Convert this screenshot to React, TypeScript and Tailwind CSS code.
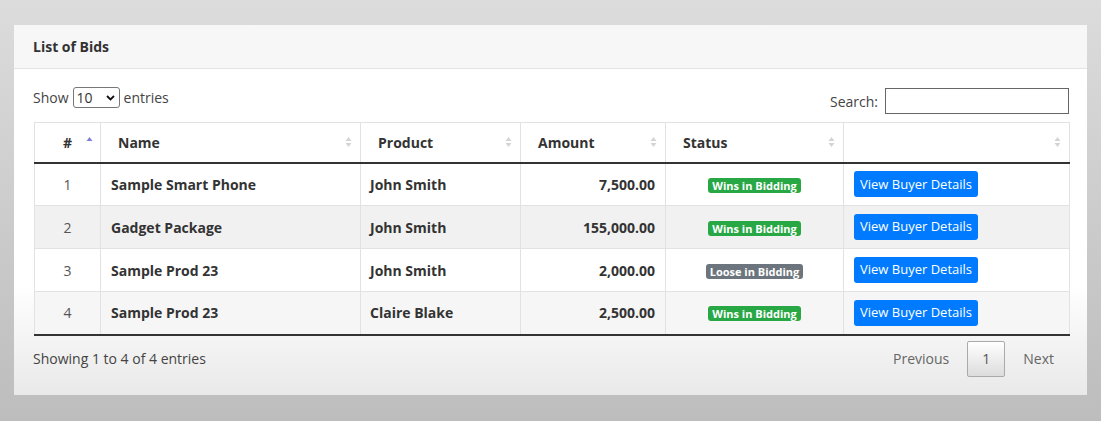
import React from 'react';

type Bid = {
  id: number;
  name: string;
  buyer: string;
  amount: string;
  won: boolean;
};

const bids: Bid[] = [
  { id: 1, name: 'Sample Smart Phone', buyer: 'John Smith', amount: '7,500.00', won: true },
  { id: 2, name: 'Gadget Package', buyer: 'John Smith', amount: '155,000.00', won: true },
  { id: 3, name: 'Sample Prod 23', buyer: 'John Smith', amount: '2,000.00', won: false },
  { id: 4, name: 'Sample Prod 23', buyer: 'Claire Blake', amount: '2,500.00', won: true },
];

const SortIcon = ({ active = false }: { active?: boolean }) => (
  <svg
    width="7"
    height="11"
    viewBox="0 0 7 11"
    className={`absolute top-1/2 -translate-y-1/2 ${active ? 'right-[7px]' : 'right-[8px]'}`}
  >
    {active ? (
      <path d="M3.5 0.5 L6.5 4.5 L0.5 4.5 Z" fill="#8080d8" />
    ) : (
      <>
        <path d="M3.5 0.5 L6.5 4.5 L0.5 4.5 Z" fill="#d4d4d4" />
        <path d="M3.5 10.5 L6.5 6.5 L0.5 6.5 Z" fill="#d4d4d4" />
      </>
    )}
  </svg>
);

const Th = ({ children, className = '', active = false }: { children?: React.ReactNode; className?: string; active?: boolean }) => (
  <th className={`relative h-[40px] border-x border-[#e2e2e2] py-0 pl-[17px] pr-[30px] text-[14px] font-bold text-[#333] ${className}`}>
    {children}
    <SortIcon active={active} />
  </th>
);

const App = () => {
  return (
    <div
      className="h-[421px] w-[1101px] overflow-hidden bg-gradient-to-b from-[#dcdcdc] to-[#bdbdbd] pt-[25px]"
      style={{ fontFamily: '"Open Sans", "Noto Sans", sans-serif' }}
    >
      <div className="ml-[14px] w-[1073px] bg-gradient-to-b from-white from-[70%] to-[#e9e9e9]">
        <div className="flex h-[44px] items-center border-b border-[#e4e4e4] bg-[#f7f7f7] pl-[19px] text-[14px] font-bold text-[#333]">
          List of Bids
        </div>

        <div className="pl-[19px] pr-[18px] pt-[18px] pb-[18px]">
          <div className="flex items-start justify-between">
            <div className="flex items-center gap-[4px] text-[14px] text-[#444]">
              <span>Show</span>
              <div className="flex h-[21px] w-[47px] items-center justify-between rounded-[3px] border border-[#777] bg-white pl-[3px] pr-[4px] text-[14px] text-[#333]">
                <span>10</span>
                <svg width="9" height="6" viewBox="0 0 9 6">
                  <path d="M1 1 L4.5 4.5 L8 1" fill="none" stroke="#111" strokeWidth="1.8" />
                </svg>
              </div>
              <span>entries</span>
            </div>
            <div className="flex items-center gap-[7px] pt-[1px] text-[14px] text-[#444]">
              <span>Search:</span>
              <div className="h-[26px] w-[184px] border border-[#666] bg-white" />
            </div>
          </div>

          <table className="mt-[8px] ml-[1px] w-[1035px] table-fixed border-collapse">
            <colgroup>
              <col className="w-[66px]" />
              <col className="w-[260px]" />
              <col className="w-[160px]" />
              <col className="w-[145px]" />
              <col className="w-[178px]" />
              <col className="w-[226px]" />
            </colgroup>
            <thead>
              <tr className="border-t border-b-2 border-t-[#e2e2e2] border-b-[#333] text-left">
                <Th className="!pl-[20px] !pr-[20px] text-center" active>
                  #
                </Th>
                <Th>Name</Th>
                <Th>Product</Th>
                <Th>Amount</Th>
                <Th>Status</Th>
                <Th />
              </tr>
            </thead>
            <tbody>
              {bids.map((b, i) => (
                <tr
                  key={b.id}
                  className={`h-[43px] border-b border-[#e2e2e2] text-[14px] text-[#333] ${i === 1 ? 'bg-[#f1f1f1]' : i === 3 ? 'bg-[#f6f6f6]' : 'bg-white'} ${i === bids.length - 1 ? '!border-b-2 !border-b-[#333]' : ''}`}
                >
                  <td className="border-x border-[#e2e2e2] text-center text-[#555]">{b.id}</td>
                  <td className="border-x border-[#e2e2e2] pl-[10px] font-bold">{b.name}</td>
                  <td className="border-x border-[#e2e2e2] pl-[9px] font-bold">{b.buyer}</td>
                  <td className="border-x border-[#e2e2e2] pr-[10px] text-right font-bold">{b.amount}</td>
                  <td className="border-x border-[#e2e2e2] text-center">
                    {b.won ? (
                      <span className="inline-block rounded-[3px] bg-[#28a745] px-[4px] text-[11px] leading-[15px] font-bold text-white">
                        Wins in Bidding
                      </span>
                    ) : (
                      <span className="inline-block rounded-[3px] bg-[#6c757d] px-[4px] text-[11px] leading-[15px] font-bold text-white">
                        Loose in Bidding
                      </span>
                    )}
                  </td>
                  <td className="border-x border-[#e2e2e2] pl-[10px]">
                    <button className="h-[26px] rounded-[3px] bg-[#007bff] px-[6px] text-[13px] text-white">
                      View Buyer Details
                    </button>
                  </td>
                </tr>
              ))}
            </tbody>
          </table>

          <div className="mt-[5px] flex items-center justify-between">
            <span className="text-[14px] text-[#444]">Showing 1 to 4 of 4 entries</span>
            <div className="flex items-center gap-[4px] text-[14px] text-[#666]">
              <span className="px-[14px] py-[7px]">Previous</span>
              <span className="flex h-[36px] w-[38px] items-center justify-center rounded-[2px] border border-[#aaa] bg-gradient-to-b from-white to-[#dcdcdc] text-[#555]">
                1
              </span>
              <span className="pl-[14px] pr-[15px] py-[7px]">Next</span>
            </div>
          </div>
        </div>
      </div>
    </div>
  );
};

export default App;
